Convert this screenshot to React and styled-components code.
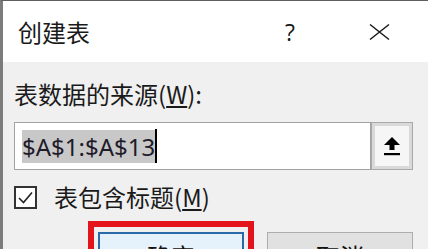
import React from "react";
import styled, { createGlobalStyle } from "styled-components";

const GlobalStyle = createGlobalStyle`
  html, body { margin: 0; padding: 0; background: #f0f0f0; }
  body { font-family: "Noto Sans CJK SC", "Noto Sans", sans-serif; overflow: hidden; }
`;

const Dialog = styled.div`
  width: 428px;
  height: 249px;
  box-sizing: border-box;
  border-left: 3px solid #7c7c7c;
  border-top: 1px solid #5e5e5e;
  background: #f0f0f0;
  display: flex;
  flex-direction: column;
  overflow: hidden;
`;

const TitleBar = styled.div`
  height: 61px;
  flex-shrink: 0;
  background: #ffffff;
  display: flex;
  align-items: center;
  padding: 0 19px 0 15px;
  gap: 29px;
`;

const Title = styled.div`
  flex: 1;
  font-size: 24px;
  line-height: 24px;
  color: #1a1a1a;
`;

const TitleButton = styled.div`
  width: 60px;
  height: 40px;
  display: flex;
  align-items: center;
  justify-content: center;
  font-family: "Open Sans", "Noto Sans", sans-serif;
  font-size: 23px;
  color: #1a1a1a;
`;

const Body = styled.div`
  padding: 20px 15px 0 11px;
  display: flex;
  flex-direction: column;
`;

const Label = styled.div`
  font-size: 24px;
  line-height: 24px;
  color: #1a1a1a;
  margin-bottom: 16px;
  u { text-decoration-thickness: 2px; text-underline-offset: 2px; }
`;

const InputRow = styled.div`
  display: flex;
  height: 48px;
`;

const Input = styled.div`
  flex: 1;
  box-sizing: border-box;
  border: 1px solid #a2a2a2;
  background: #ffffff;
  display: flex;
  align-items: center;
  padding-left: 7px;
`;

const Selected = styled.span`
  font-family: "Noto Sans", sans-serif;
  font-size: 24px;
  line-height: 33px;
  color: #1e1b2a;
  background: #c8c8c8;
`;

const Caret = styled.span`
  display: inline-block;
  width: 2px;
  height: 34px;
  background: #000;
`;

const PickButton = styled.div`
  width: 42px;
  box-sizing: border-box;
  border: 1px solid #a9a9a9;
  background: #d9d9d9;
  padding: 3px;
  display: flex;
`;

const PickInner = styled.div`
  flex: 1;
  background: #f6f6f6;
  display: flex;
  align-items: center;
  justify-content: center;
`;

const CheckRow = styled.div`
  margin-top: 15px;
  height: 24px;
  display: flex;
  align-items: center;
  gap: 17px;
`;

const CheckBox = styled.div`
  width: 23px;
  height: 23px;
  flex-shrink: 0;
  box-sizing: border-box;
  border: 2px solid #333333;
  background: #ffffff;
  display: flex;
  align-items: center;
  justify-content: center;
`;

const CheckLabel = styled.div`
  font-size: 24px;
  line-height: 24px;
  color: #1a1a1a;
  u { text-decoration-thickness: 2px; text-underline-offset: 2px; }
`;

const ButtonRow = styled.div`
  margin-top: 12px;
  display: flex;
  justify-content: flex-end;
  align-items: flex-start;
  gap: 13px;
`;

const FocusRing = styled.div`
  border: 6px solid #e3141c;
  padding: 5px 4px 4px;
`;

const Button = styled.div`
  width: 146px;
  height: 48px;
  box-sizing: border-box;
  border: ${(p) => (p.$primary ? "2px solid #2a6aa8" : "1px solid #adadad")};
  background: ${(p) => (p.$primary ? "#e5f1fb" : "#e1e1e1")};
  margin-top: ${(p) => (p.$primary ? "0" : "11px")};
  display: flex;
  align-items: center;
  justify-content: center;
  font-size: 24px;
  line-height: 24px;
  color: #111;
`;

export default function App() {
  return (
    <>
      <GlobalStyle />
      <Dialog>
        <TitleBar>
          <Title>创建表</Title>
          <TitleButton>?</TitleButton>
          <TitleButton>
            <svg width="21" height="16" viewBox="0 0 21 16">
              <path d="M1 0.5 L20 15.5 M20 0.5 L1 15.5" stroke="#1a1a1a" strokeWidth="1.4" fill="none" />
            </svg>
          </TitleButton>
        </TitleBar>
        <Body>
          <Label>
            表数据的来源(<u>W</u>):
          </Label>
          <InputRow>
            <Input>
              <Selected>$A$1:$A$13</Selected>
              <Caret />
            </Input>
            <PickButton>
              <PickInner>
                <svg width="18" height="19" viewBox="0 0 18 19">
                  <polygon points="1,8 9,0 17,8 11.5,8 11.5,13 6.5,13 6.5,8" fill="#000" />
                  <rect x="1" y="16" width="16" height="2.2" fill="#000" />
                </svg>
              </PickInner>
            </PickButton>
          </InputRow>
          <CheckRow>
            <CheckBox>
              <svg width="19" height="19" viewBox="0 0 19 19">
                <polyline points="3,10 7.5,14.5 16,4.5" stroke="#222" strokeWidth="1.6" fill="none" />
              </svg>
            </CheckBox>
            <CheckLabel>
              表包含标题(<u>M</u>)
            </CheckLabel>
          </CheckRow>
          <ButtonRow>
            <FocusRing>
              <Button $primary>确定</Button>
            </FocusRing>
            <Button>取消</Button>
          </ButtonRow>
        </Body>
      </Dialog>
    </>
  );
}
